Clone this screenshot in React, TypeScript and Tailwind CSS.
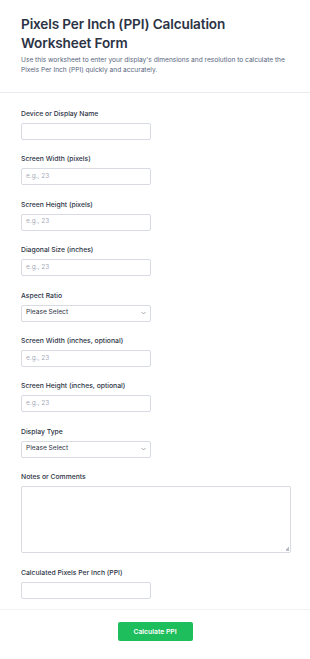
const fields: { label: string; kind: 'input' | 'select' | 'text'; placeholder?: string }[] = [
  { label: 'Device or Display Name', kind: 'text' },
  { label: 'Screen Width (pixels)', kind: 'input', placeholder: 'e.g., 23' },
  { label: 'Screen Height (pixels)', kind: 'input', placeholder: 'e.g., 23' },
  { label: 'Diagonal Size (inches)', kind: 'input', placeholder: 'e.g., 23' },
  { label: 'Aspect Ratio', kind: 'select' },
  { label: 'Screen Width (inches, optional)', kind: 'input', placeholder: 'e.g., 23' },
  { label: 'Screen Height (inches, optional)', kind: 'input', placeholder: 'e.g., 23' },
  { label: 'Display Type', kind: 'select' },
];

function Field({ label, kind, placeholder }: (typeof fields)[number]) {
  return (
    <div className="flex h-[45.4px] flex-col">
      <label className="h-[10px] text-[6.8px] font-medium leading-[10px] text-[#2c3345]">{label}</label>
      <div className="mt-[4px]">
        {kind === 'select' ? (
          <div className="flex h-[17px] w-[130px] items-center justify-between rounded-[2px] border border-[#d8dbe3] bg-white px-[4px] text-[6.6px] text-[#2c3345]">
            <span>Please Select</span>
            <svg width="5" height="4" viewBox="0 0 10 6" fill="none" stroke="#8d93a3" strokeWidth="1.6">
              <path d="M1 1l4 4 4-4" />
            </svg>
          </div>
        ) : (
          <div className="flex h-[17px] w-[130px] items-center rounded-[2px] border border-[#d8dbe3] bg-white px-[4px] text-[6.5px] text-[#a5abb8]">
            {placeholder}
          </div>
        )}
      </div>
    </div>
  );
}

export default function App() {
  return (
    <div className="min-h-[659px] w-[310px] bg-white font-['Inter',sans-serif]">
      <div className="px-[21px] pt-[15px] pb-[17px]">
        <h1 className="text-[13.6px] font-semibold leading-[19px] tracking-[-0.01em] text-[#2c3345]">
          Pixels Per Inch (PPI) Calculation Worksheet Form
        </h1>
        <p className="mt-[3px] text-[6.6px] leading-[9.5px] text-[#57647e]">
          Use this worksheet to enter your display's dimensions and resolution to calculate the Pixels Per Inch (PPI) quickly and accurately.
        </p>
      </div>
      <div className="h-px bg-[#eaebf0]" />
      <div className="px-[21px] pt-[16px]">
        {fields.map((f) => (
          <Field key={f.label} {...f} />
        ))}
        <div className="flex flex-col">
          <label className="h-[10px] text-[6.8px] font-medium leading-[10px] text-[#2c3345]">Notes or Comments</label>
          <div className="relative mt-[4px] h-[67px] w-[270px] rounded-[2px] border border-[#d8dbe3] bg-white">
            <svg className="absolute right-[1px] bottom-[1px]" width="4" height="4" viewBox="0 0 4 4" fill="#b8bcc6">
              <rect x="3" y="0" width="1" height="1" />
              <rect x="2" y="1" width="2" height="1" />
              <rect x="1" y="2" width="3" height="2" />
            </svg>
          </div>
        </div>
        <div className="mt-[15px] flex flex-col pb-[10px]">
          <label className="h-[10px] text-[6.8px] font-medium leading-[10px] text-[#2c3345]">Calculated Pixels Per Inch (PPI)</label>
          <div className="mt-[4px] h-[17px] w-[130px] rounded-[2px] border border-[#d8dbe3] bg-white" />
        </div>
      </div>
      <div className="h-px bg-[#f1f2f5]" />
      <div className="flex justify-center pt-[12px] pb-[17px]">
        <button className="h-[19px] w-[75px] rounded-[2px] bg-[#1ebe5d] text-[6.8px] font-semibold text-white">
          Calculate PPI
        </button>
      </div>
    </div>
  );
}
